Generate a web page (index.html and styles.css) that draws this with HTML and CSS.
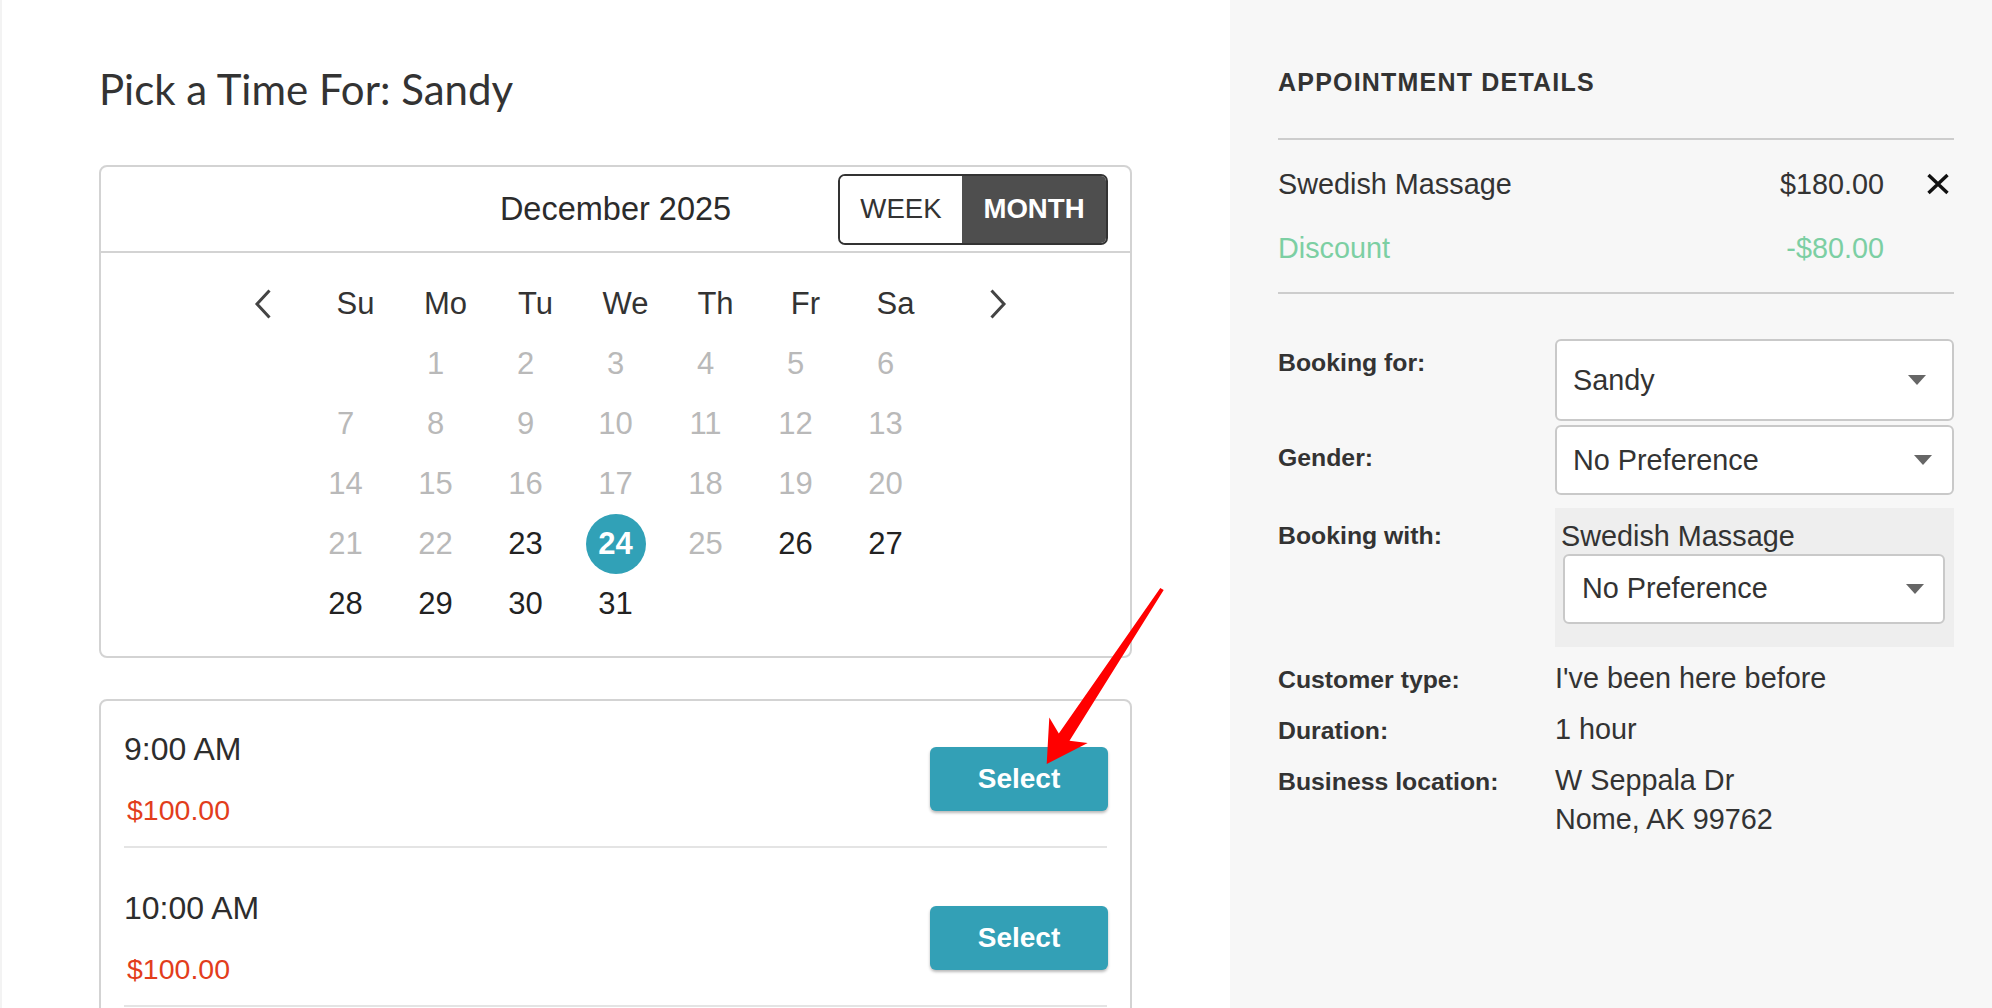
FILE: index.html
```html
<!DOCTYPE html>
<html lang="en">
<head>
<meta charset="utf-8">
<title>Pick a Time</title>
<link rel="stylesheet" href="styles.css">
</head>
<body>
<div class="page">
  <main class="main">
    <h1 class="title">Pick a Time For: Sandy</h1>

    <section class="card calendar">
      <div class="cal-head">
        <div class="cal-month">December 2025</div>
        <div class="toggle">
          <div class="toggle-btn toggle-week">WEEK</div>
          <div class="toggle-btn toggle-month">MONTH</div>
        </div>
      </div>
      <div class="cal-body">
        <div class="cal-dow">
          <span class="cal-nav cal-nav--prev"><svg width="18" height="30" viewBox="0 0 18 30"><path d="M15.5 1.5 L3 15 L15.5 28.5" fill="none" stroke="#444" stroke-width="3"/></svg></span>
          <span class="dow">Su</span><span class="dow">Mo</span><span class="dow">Tu</span><span class="dow">We</span><span class="dow">Th</span><span class="dow">Fr</span><span class="dow">Sa</span>
          <span class="cal-nav cal-nav--next"><svg width="18" height="30" viewBox="0 0 18 30"><path d="M2.5 1.5 L15 15 L2.5 28.5" fill="none" stroke="#444" stroke-width="3"/></svg></span>
        </div>
        <div class="cal-days">
          <span class="day"></span><span class="day day--off">1</span><span class="day day--off">2</span><span class="day day--off">3</span><span class="day day--off">4</span><span class="day day--off">5</span><span class="day day--off">6</span>
          <span class="day day--off">7</span><span class="day day--off">8</span><span class="day day--off">9</span><span class="day day--off">10</span><span class="day day--off">11</span><span class="day day--off">12</span><span class="day day--off">13</span>
          <span class="day day--off">14</span><span class="day day--off">15</span><span class="day day--off">16</span><span class="day day--off">17</span><span class="day day--off">18</span><span class="day day--off">19</span><span class="day day--off">20</span>
          <span class="day day--off">21</span><span class="day day--off">22</span><span class="day">23</span><span class="day"><span class="day-selected">24</span></span><span class="day day--off">25</span><span class="day">26</span><span class="day">27</span>
          <span class="day">28</span><span class="day">29</span><span class="day">30</span><span class="day">31</span>
        </div>
      </div>
    </section>

    <section class="card slots">
      <div class="slot">
        <div class="slot-info">
          <div class="slot-time">9:00 AM</div>
          <div class="slot-price">$100.00</div>
        </div>
        <button class="btn-select">Select</button>
      </div>
      <div class="slot">
        <div class="slot-info">
          <div class="slot-time">10:00 AM</div>
          <div class="slot-price">$100.00</div>
        </div>
        <button class="btn-select">Select</button>
      </div>
    </section>
  </main>

  <aside class="aside">
    <h2 class="aside-title">APPOINTMENT DETAILS</h2>
    <div class="line-items">
      <div class="line">
        <span class="line-name">Swedish Massage</span>
        <span class="line-price">$180.00</span>
        <span class="line-x"><svg width="24" height="22" viewBox="0 0 24 22"><path d="M2.5 2 L21.5 20 M21.5 2 L2.5 20" stroke="#111" stroke-width="3.4" fill="none"/></svg></span>
      </div>
      <div class="line line--discount">
        <span class="line-name">Discount</span>
        <span class="line-price">-$80.00</span>
        <span class="line-x"></span>
      </div>
    </div>

    <div class="field field--for">
      <div class="field-label">Booking for:</div>
      <div class="select select--tall"><span>Sandy</span><span class="caret"></span></div>
    </div>
    <div class="field field--gender">
      <div class="field-label">Gender:</div>
      <div class="select select--gender"><span>No Preference</span><span class="caret"></span></div>
    </div>
    <div class="field field--with">
      <div class="field-label">Booking with:</div>
      <div class="with-box">
        <div class="with-name">Swedish Massage</div>
        <div class="select select--inner"><span>No Preference</span><span class="caret"></span></div>
      </div>
    </div>
    <div class="field field--info field--first-info">
      <div class="field-label">Customer type:</div>
      <div class="field-value">I've been here before</div>
    </div>
    <div class="field field--info">
      <div class="field-label">Duration:</div>
      <div class="field-value">1 hour</div>
    </div>
    <div class="field field--info">
      <div class="field-label">Business location:</div>
      <div class="field-value">W Seppala Dr<br>Nome, AK 99762</div>
    </div>
  </aside>

  <svg class="annotation" width="1992" height="1008" viewBox="0 0 1992 1008">
    <polygon points="1160.3,587.9 1058.8,733.5 1049.3,717.6 1046.7,764 1087.7,743.1 1069.5,740.7 1163.7,590.1" fill="#ff0000"/>
  </svg>
</div>
</body>
</html>
```

FILE: styles.css
```css
* { box-sizing: border-box; margin: 0; padding: 0; }

html, body {
  width: 1992px;
  height: 1008px;
  overflow: hidden;
}

body {
  font-family: "Liberation Sans", Arial, Helvetica, sans-serif;
  color: #333;
  background: #fff;
}

.page {
  position: relative;
  display: flex;
  height: 1008px;
}

/* ---------- left column ---------- */
.main {
  flex: 0 0 1230px;
  width: 1230px;
  border-left: 2px solid #f3f3f3;
  padding: 64px 0 0 97px;
  background: #fff;
}

.title {
  font-family: Lato, "Open Sans", sans-serif;
  font-weight: 400;
  font-size: 42px;
  line-height: 51px;
  color: #333;
  margin-bottom: 50px;
}

.card {
  width: 1033px;
  border: 2px solid #d3d3d3;
  border-radius: 8px;
  background: #fff;
}

.cal-head {
  display: grid;
  grid-template-columns: 1fr auto 1fr;
  align-items: center;
  height: 86px;
  border-bottom: 2px solid #d3d3d3;
}

.cal-month {
  grid-column: 2;
  font-size: 32.5px;
  color: #2b2b2b;
  padding-top: 1px;
}

.toggle {
  grid-column: 3;
  justify-self: end;
  margin-right: 22px;
  display: flex;
  width: 270px;
  height: 71px;
  border: 2px solid #333;
  border-radius: 7px;
  overflow: hidden;
}

.toggle-btn {
  display: flex;
  align-items: center;
  justify-content: center;
  font-size: 27.6px;
}

.toggle-week {
  flex: 0 0 122px;
  background: #fff;
  color: #333;
}

.toggle-month {
  flex: 1;
  background: #4e4e4e;
  color: #fff;
  font-weight: bold;
}

.cal-body {
  padding: 21px 0 22px;
}

.cal-dow {
  display: grid;
  grid-template-columns: 1fr repeat(7, 90px) 1fr;
  height: 60px;
  align-items: center;
}

.cal-nav {
  display: flex;
  align-items: center;
}

.cal-nav--prev {
  justify-self: end;
  margin-right: 29px;
}

.cal-nav--next {
  justify-self: start;
  margin-left: 58.5px;
}

.dow {
  font-size: 31px;
  line-height: 60px;
  text-align: center;
  padding-left: 20px;
  color: #333;
}

.cal-days {
  display: grid;
  grid-template-columns: repeat(7, 90px);
  grid-auto-rows: 60px;
  justify-content: center;
  align-items: center;
  justify-items: center;
}

.day {
  font-size: 31px;
  line-height: 60px;
  color: #222;
}

.day--off {
  color: #b9b9b9;
}

.day-selected {
  display: inline-flex;
  align-items: center;
  justify-content: center;
  width: 60px;
  height: 60px;
  border-radius: 50%;
  background: #31a1b7;
  color: #fff;
  font-weight: bold;
}

/* ---------- slots ---------- */
.slots {
  margin-top: 41px;
  padding: 0 23px 40px;
}

.slot {
  display: flex;
  align-items: center;
  justify-content: space-between;
  padding: 42px 0 20px;
  border-bottom: 2px solid #e4e4e4;
}

.slot:first-child {
  padding-top: 30px;
}

.slot-time {
  font-size: 32px;
  line-height: 36px;
  color: #2d2d2d;
}

.slot-price {
  margin-top: 27px;
  padding-left: 3px;
  font-size: 28.5px;
  line-height: 32px;
  color: #e23d1c;
}

.btn-select {
  width: 178px;
  height: 64px;
  margin-right: -1px;
  border: none;
  border-radius: 6px;
  background: #33a0b6;
  box-shadow: 0 2px 3px rgba(0, 0, 0, 0.28);
  color: #fff;
  font-family: "Liberation Sans", Arial, sans-serif;
  font-weight: bold;
  font-size: 28px;
}

/* ---------- right column ---------- */
.aside {
  flex: 1;
  background: #f7f7f7;
  padding: 67px 38px 0 48px;
}

.aside-title {
  font-size: 25px;
  font-weight: bold;
  letter-spacing: 1.2px;
  line-height: 30px;
  color: #333;
  padding-bottom: 41px;
  border-bottom: 2px solid #cdcdcd;
}

.line-items {
  padding: 23.5px 0 24.5px;
  border-bottom: 2px solid #cdcdcd;
}

.line {
  display: flex;
  align-items: center;
  font-size: 28.8px;
  line-height: 40px;
  color: #333;
}

.line + .line {
  margin-top: 24px;
}

.line-name {
  flex: 1;
}

.line-price {
  text-align: right;
}

.line-x {
  width: 70px;
  display: flex;
  justify-content: flex-end;
  padding-right: 4px;
}

.line--discount {
  color: #7ccfa3;
}

.field {
  display: grid;
  grid-template-columns: 277px 1fr;
}

.field-label {
  font-size: 24.8px;
  font-weight: bold;
  line-height: 30px;
  color: #333;
}

.field--for {
  margin-top: 45px;
}

.field--for .field-label {
  padding-top: 9px;
}

.field--gender {
  margin-top: 4px;
}

.field--gender .field-label {
  padding-top: 18px;
}

.field--with {
  margin-top: 13px;
}

.field--with .field-label {
  padding-top: 13px;
}

.select {
  display: flex;
  align-items: center;
  justify-content: space-between;
  height: 70px;
  padding: 0 20px 0 16px;
  background: #fff;
  border: 2px solid #c9c9c9;
  border-radius: 6px;
  font-size: 28.8px;
  color: #333;
}

.select--tall {
  height: 82px;
  padding-right: 26px;
}

.select--inner {
  height: 70px;
  padding-right: 19px;
  padding-left: 17px;
}

.caret {
  width: 0;
  height: 0;
  border-left: 9.5px solid transparent;
  border-right: 9.5px solid transparent;
  border-top: 10px solid #666;
}

.with-box {
  background: #eee;
  padding: 9.5px 9px 23.5px 8px;
}

.with-name {
  font-size: 28.8px;
  line-height: 36px;
  margin: 0 0 0 -2px;
  color: #333;
}

.field--info {
  align-items: baseline;
  margin-top: 12px;
}

.field--first-info {
  margin-top: 11.5px;
}

.field-value {
  font-size: 28.8px;
  line-height: 39px;
  color: #333;
}

/* annotation overlay */
.annotation {
  position: absolute;
  left: 0;
  top: 0;
  pointer-events: none;
}
```
